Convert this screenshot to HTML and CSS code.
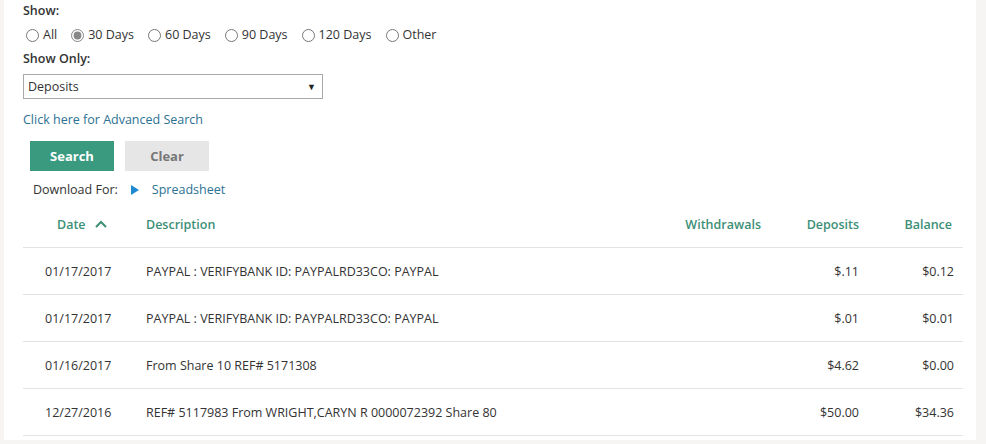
FILE: index.html
```html
<!DOCTYPE html>
<html lang="en">
<head>
  <meta charset="UTF-8" />
  <title>Account History</title>
  <link rel="stylesheet" href="styles.css">
</head>
<body>
  <div class="panel">
    <!-- Filter form -->
    <div class="label">Show:</div>
    <div class="radios">
      <label><input type="radio" name="range"> All</label>
      <label><input type="radio" name="range" checked> 30 Days</label>
      <label><input type="radio" name="range"> 60 Days</label>
      <label><input type="radio" name="range"> 90 Days</label>
      <label><input type="radio" name="range"> 120 Days</label>
      <label><input type="radio" name="range"> Other</label>
    </div>
    <div class="label">Show Only:</div>
    <div class="select">
      <span>Deposits</span>
      <span class="arrow">&#9660;</span>
    </div>
    <a class="adv-link" href="#">Click here for Advanced Search</a>

    <div class="buttons">
      <button class="btn-search">Search</button>
      <button class="btn-clear">Clear</button>
    </div>

    <div class="download">
      Download For:
      <span class="play"></span>
      <a href="#">Spreadsheet</a>
    </div>

    <!-- Transactions -->
    <table class="history">
      <tr>
        <th class="col-date">Date <svg class="chev" width="12" height="8" viewBox="0 0 12 8"><path d="M1 7 L6 2 L11 7" fill="none" stroke="#3d8f77" stroke-width="2"/></svg></th>
        <th class="col-desc">Description</th>
        <th class="num col-wd">Withdrawals</th>
        <th class="num col-dep">Deposits</th>
        <th class="num col-bal">Balance</th>
      </tr>
      <tr>
        <td class="col-date">01/17/2017</td>
        <td class="col-desc">PAYPAL : VERIFYBANK ID: PAYPALRD33CO: PAYPAL</td>
        <td class="num"></td>
        <td class="num">$.11</td>
        <td class="num">$0.12</td>
      </tr>
      <tr>
        <td class="col-date">01/17/2017</td>
        <td class="col-desc">PAYPAL : VERIFYBANK ID: PAYPALRD33CO: PAYPAL</td>
        <td class="num"></td>
        <td class="num">$.01</td>
        <td class="num">$0.01</td>
      </tr>
      <tr>
        <td class="col-date">01/16/2017</td>
        <td class="col-desc">From Share 10 REF# 5171308</td>
        <td class="num"></td>
        <td class="num">$4.62</td>
        <td class="num">$0.00</td>
      </tr>
      <tr>
        <td class="col-date">12/27/2016</td>
        <td class="col-desc">REF# 5117983 From WRIGHT,CARYN R 0000072392 Share 80</td>
        <td class="num"></td>
        <td class="num">$50.00</td>
        <td class="num">$34.36</td>
      </tr>
    </table>
  </div>
</body>
</html>
```

FILE: styles.css
```css
body {
  margin: 0;
  background: #f6f5f3;
  font-family: "Open Sans", Arial, sans-serif;
  font-size: 12.5px;
  color: #333;
  overflow: hidden;
}

.panel {
  background: #fff;
  margin: 0 10px 0 4px;
  padding: 1px 13px 4px 19px;
  height: 440px;
  box-sizing: border-box;
}

.label {
  font-weight: 600;
  line-height: 18px;
  padding-top: 1px;
}

.radios {
  display: flex;
  gap: 14px;
  margin: 7px 0 6px 3px;
  line-height: 16px;
}

.radios label {
  display: inline-flex;
  align-items: center;
}

.radios input {
  margin: 0 4px 0 0;
  width: 13px;
  height: 13px;
  accent-color: #888;
}

.select {
  margin-top: 6px;
  width: 300px;
  height: 25px;
  box-sizing: border-box;
  border: 1px solid #a9a9a9;
  display: flex;
  align-items: center;
  justify-content: space-between;
  padding: 0 6px 0 4px;
}

.select .arrow {
  font-size: 9px;
  color: #222;
}

.adv-link {
  display: block;
  margin-top: 12px;
  color: #2b7193;
  text-decoration: none;
  line-height: 18px;
}

.buttons {
  display: flex;
  gap: 11px;
  margin: 12px 0 0 7px;
}

.buttons button {
  width: 84px;
  height: 30px;
  border: none;
  font-family: inherit;
  font-size: 13px;
  font-weight: 700;
}

.btn-search {
  background: #3a9a80;
  color: #fff;
}

.btn-clear {
  background: #e6e6e6;
  color: #777;
}

.download {
  margin: 10px 0 0 10px;
  display: flex;
  align-items: center;
  line-height: 18px;
}

.download .play {
  width: 0;
  height: 0;
  border-left: 8px solid #1e88d0;
  border-top: 5px solid transparent;
  border-bottom: 5px solid transparent;
  margin: 0 13px 0 13px;
}

.download a {
  color: #2b7193;
  text-decoration: none;
}

.history {
  width: 940px;
  border-collapse: collapse;
  margin-top: 2px;
}

.history th {
  color: #3d8f77;
  font-weight: 600;
  height: 46px;
  border-bottom: 1px solid #e2e2e2;
  text-align: left;
  padding: 0;
}

.history td {
  height: 46px;
  border-bottom: 1px solid #e2e2e2;
  padding: 0;
}

.col-date {
  width: 123px;
  padding-left: 22px !important;
  box-sizing: border-box;
}

.history th.col-date {
  padding-left: 34px !important;
}

.chev {
  margin-left: 6px;
  vertical-align: 1px;
}

.num {
  text-align: right !important;
}

.history th.col-wd,
.history td:nth-child(3) {
  width: 120px;
}

.history th.col-dep,
.history td:nth-child(4) {
  width: 98px;
  padding-right: 0;
}

.history th.col-bal {
  width: 93px;
  padding-right: 11px;
}

.history td:nth-child(5) {
  padding-right: 9px;
}
```
